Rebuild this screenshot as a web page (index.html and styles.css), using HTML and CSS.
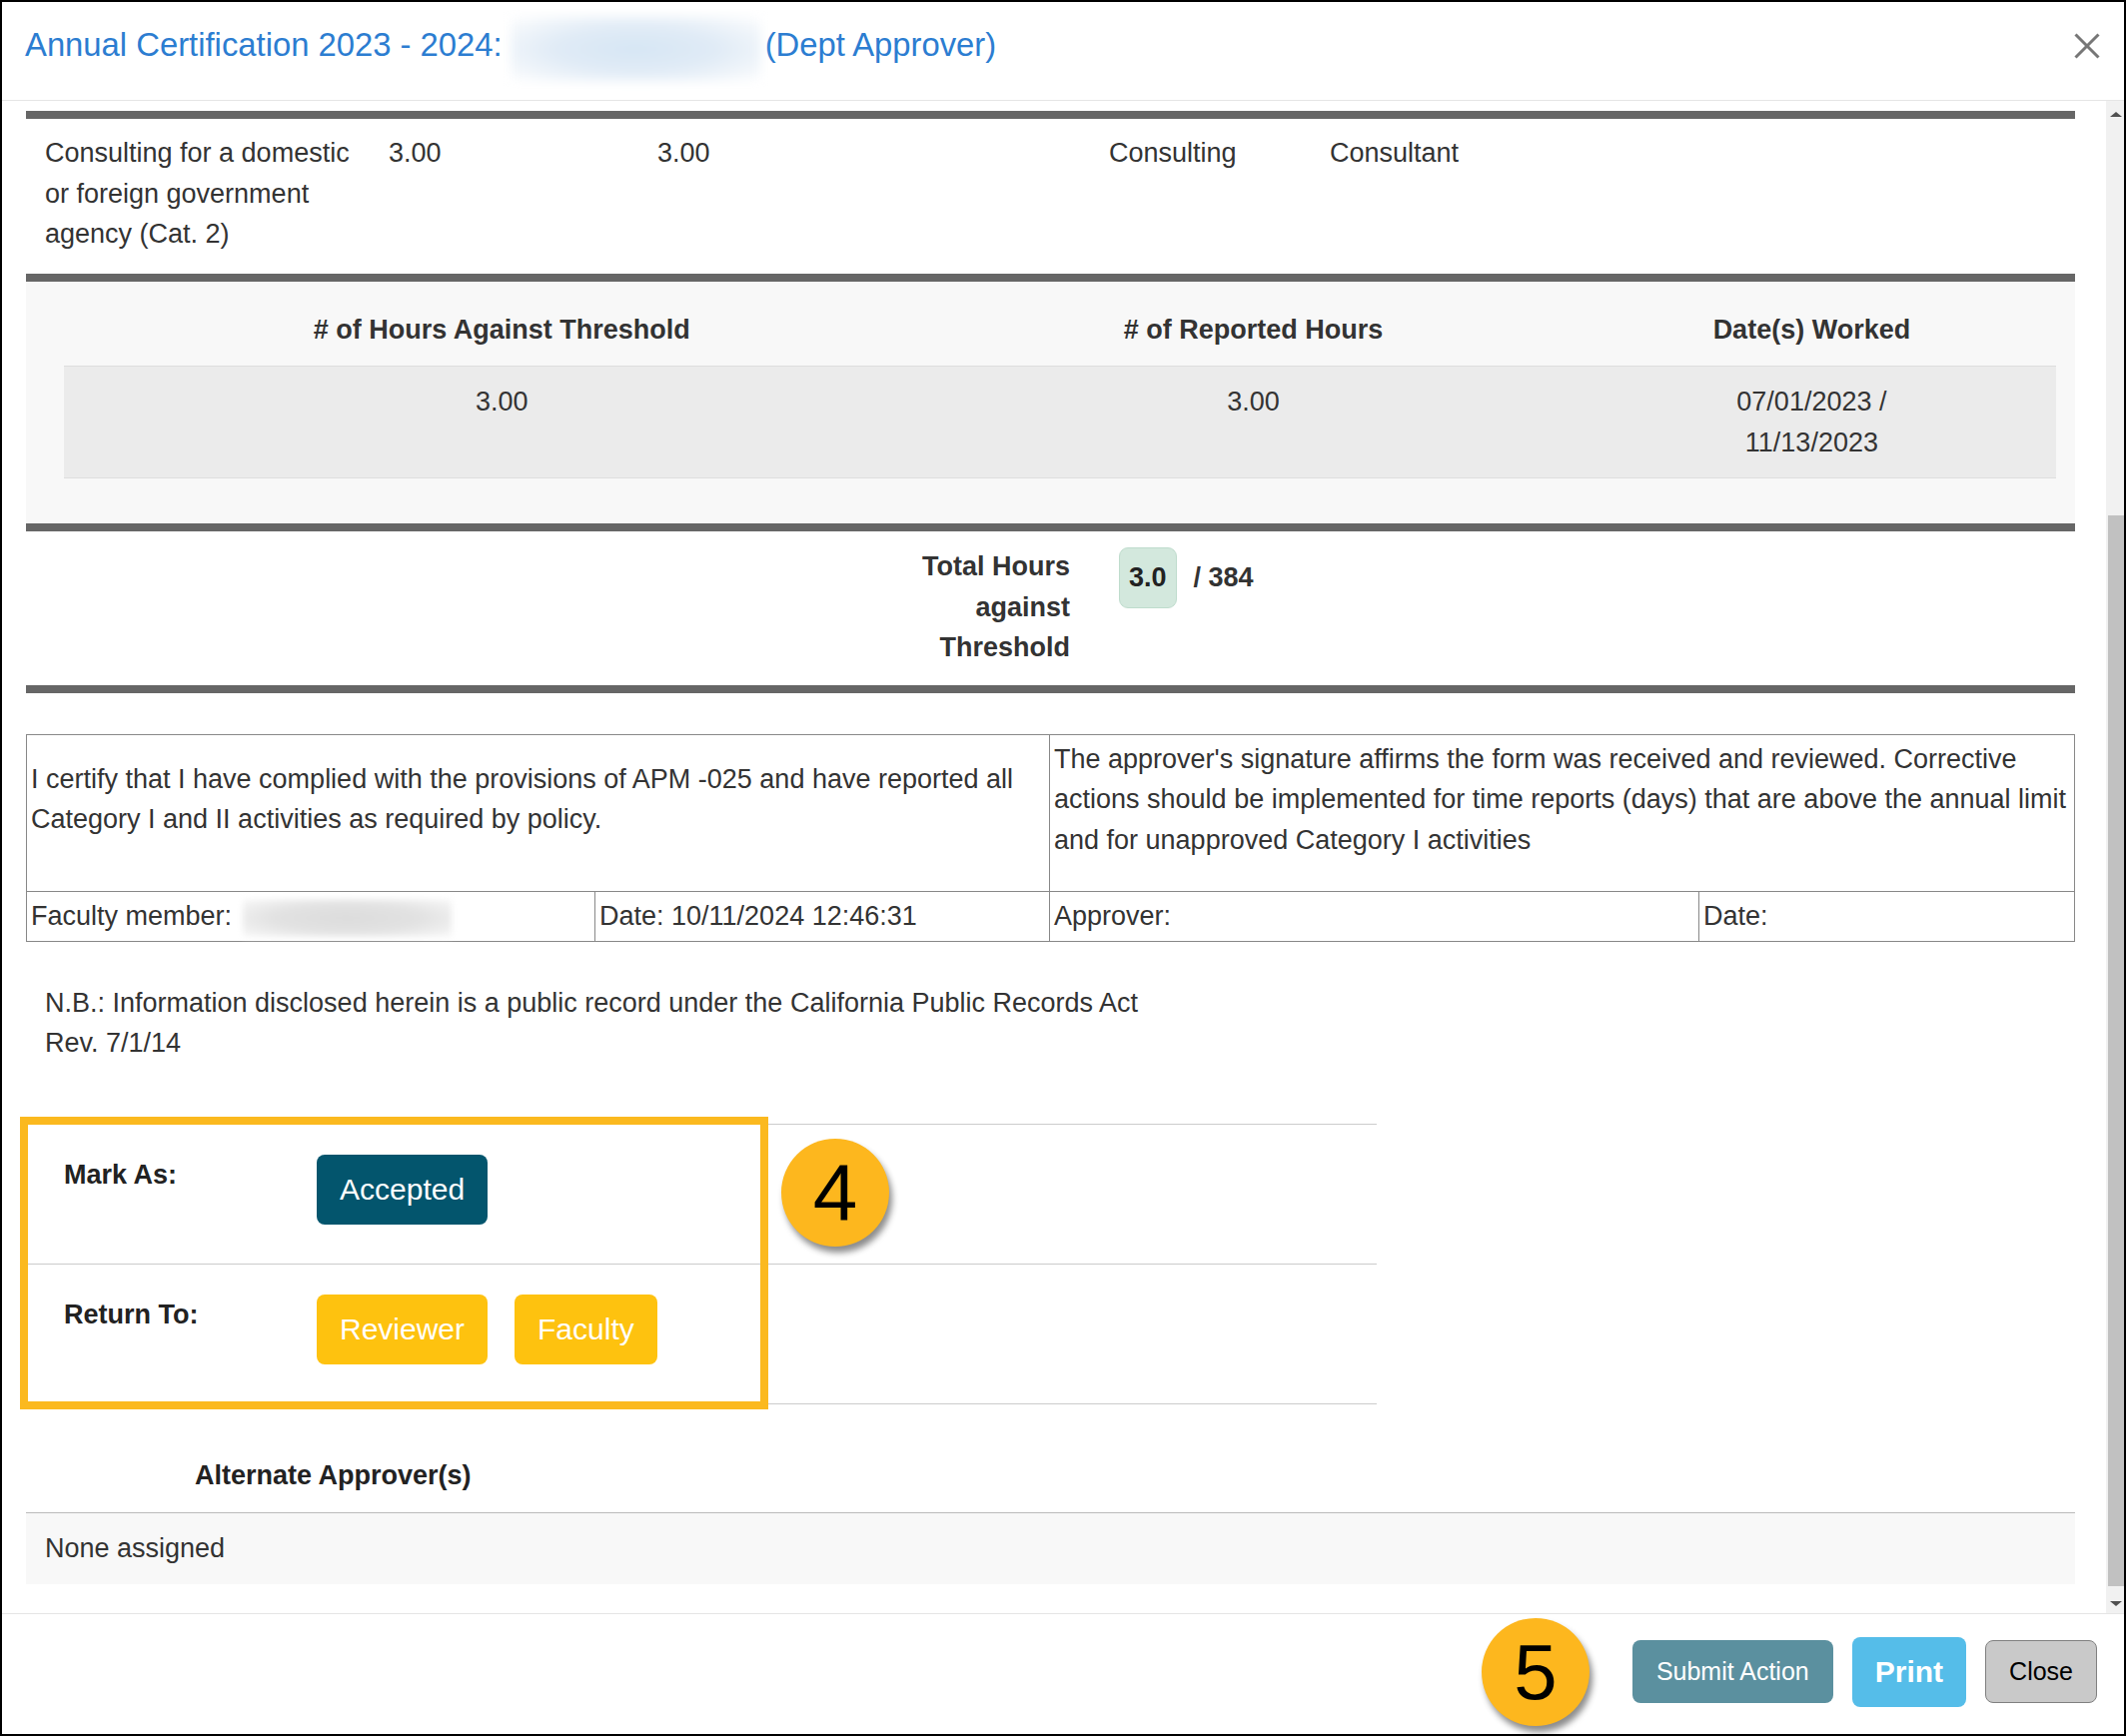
FILE: index.html
```html
<!DOCTYPE html>
<html lang="en">
<head>
<meta charset="utf-8">
<title>Annual Certification</title>
<link rel="stylesheet" href="styles.css">
</head>
<body>
<div class="frame">
  <header class="hdr">
    <h1 class="title"><span>Annual Certification 2023 - 2024:</span><span class="blur-name"></span><span class="role">(Dept Approver)</span></h1>
    <svg class="x-icon" width="26" height="26" viewBox="0 0 26 26"><line x1="1.5" y1="1.5" x2="24.5" y2="24.5"/><line x1="24.5" y1="1.5" x2="1.5" y2="24.5"/></svg>
  </header>
  <div class="scroll">
    <main class="content">
      <div class="bar"></div>
      <div class="activity">
        <div class="a1">Consulting for a domestic or foreign government agency (Cat. 2)</div>
        <div class="a2">3.00</div>
        <div class="a3">3.00</div>
        <div class="a4">Consulting</div>
        <div class="a5">Consultant</div>
      </div>
      <div class="bar"></div>
      <div class="panel">
        <table class="hours">
          <colgroup><col class="hc1"><col class="hc2"><col class="hc3"></colgroup>
          <thead>
            <tr><th># of Hours Against Threshold</th><th># of Reported Hours</th><th>Date(s) Worked</th></tr>
          </thead>
          <tbody>
            <tr><td>3.00</td><td>3.00</td><td>07/01/2023 /<br>11/13/2023</td></tr>
          </tbody>
        </table>
      </div>
      <div class="bar"></div>
      <div class="total">
        <div class="total-label">Total Hours against Threshold</div>
        <div class="total-val"><span class="badge">3.0</span><span class="of">/ 384</span></div>
      </div>
      <div class="bar"></div>
      <table class="cert">
        <colgroup><col class="cc1"><col class="cc2"><col class="cc3"><col class="cc4"></colgroup>
        <tr>
          <td colspan="2" class="stmt"><p>I certify that I have complied with the provisions of APM -025 and have reported all Category I and II activities as required by policy.</p></td>
          <td colspan="2" class="stmt"><p>The approver's signature affirms the form was received and reviewed. Corrective actions should be implemented for time reports (days) that are above the annual limit and for unapproved Category I activities</p></td>
        </tr>
        <tr class="sig">
          <td>Faculty member: <span class="blur-fac"></span></td>
          <td>Date: 10/11/2024 12:46:31</td>
          <td>Approver:</td>
          <td>Date:</td>
        </tr>
      </table>
      <div class="nb">N.B.: Information disclosed herein is a public record under the California Public Records Act<br>Rev. 7/1/14</div>
      <div class="actions">
        <div class="arow">
          <div class="alabel">Mark As:</div>
          <div class="abtns"><span class="btn btn-acc">Accepted</span></div>
        </div>
        <div class="arow">
          <div class="alabel">Return To:</div>
          <div class="abtns"><span class="btn btn-yel">Reviewer</span><span class="btn btn-yel">Faculty</span></div>
        </div>
        <div class="highlight"></div>
        <div class="callout c4">4</div>
      </div>
      <div class="alt-h">Alternate Approver(s)</div>
      <div class="alt-row">None assigned</div>
    </main>
    <div class="sbar">
      <div class="arr-up"></div>
      <div class="thumb"></div>
      <div class="arr-down"></div>
    </div>
  </div>
  <footer class="ftr">
    <div class="callout c5">5</div>
    <span class="fbtn f-submit">Submit Action</span>
    <span class="fbtn f-print">Print</span>
    <span class="fbtn f-close">Close</span>
  </footer>
</div>
</body>
</html>
```

FILE: styles.css
```css
* { box-sizing: border-box; }
html, body { margin: 0; padding: 0; background: #fff; }
body {
  font-family: "Liberation Sans", Arial, sans-serif;
  font-size: 27px;
  line-height: 40.5px;
  color: #333;
}
.frame {
  width: 2128px;
  height: 1738px;
  border: 2px solid #000;
  display: flex;
  flex-direction: column;
  overflow: hidden;
}

/* header */
.hdr {
  height: 99px;
  flex: none;
  display: flex;
  align-items: flex-start;
  padding: 24px 24px 0 23px;
  border-bottom: 1px solid #e5e5e5;
}
.title {
  margin: 0;
  display: flex;
  align-items: flex-start;
  font-size: 32.8px;
  line-height: 38px;
  font-weight: normal;
  color: #2c7dd1;
  white-space: nowrap;
}
.blur-name {
  display: inline-block;
  width: 251px;
  height: 66px;
  margin: -10px 4px 0 8px;
  background: radial-gradient(ellipse at 50% 50%, #d6e6f4 0%, #e0ebf6 45%, #f3f7fb 80%, #fff 100%);
  filter: blur(5px);
}
.x-icon {
  margin-left: auto;
  margin-top: 7px;
  stroke: #777;
  stroke-width: 3;
}

/* scroll area */
.scroll {
  flex: 1;
  display: flex;
  min-height: 0;
}
.content {
  flex: 1;
  padding: 10px 31px 0 24px;
}
.bar {
  height: 8px;
  background: #666;
}
.activity {
  display: grid;
  grid-template-columns: 344px 269px 452px 221px 1fr;
  padding: 14px 0 19px;
}
.activity > div { padding-left: 19px; }
.activity .a1 { padding-right: 10px; }

.panel {
  background: #f8f8f8;
  padding: 12px 19px 45px 38px;
}
.hours {
  width: 100%;
  border-collapse: collapse;
  table-layout: fixed;
}
.hc1 { width: 876px; }
.hc2 { width: 628px; }
.hc3 { width: 489px; }
.hours th {
  font-weight: bold;
  text-align: center;
  padding: 16px 0;
  border-bottom: 1px solid #dedede;
}
.hours td {
  text-align: center;
  vertical-align: top;
  background: #ebebeb;
  padding: 15px 0;
  border-bottom: 1px solid #dedede;
}

.total {
  display: flex;
  align-items: flex-start;
  padding: 15px 0 17px 855px;
}
.total-label {
  width: 190px;
  text-align: right;
  font-weight: bold;
}
.total-val {
  margin-left: 49px;
  margin-top: 1px;
  display: flex;
  align-items: center;
  font-weight: bold;
}
.badge {
  display: inline-block;
  background: #d3e8dd;
  border: 1px solid #bfdccd;
  border-radius: 9px;
  padding: 9px 9px;
  line-height: 41px;
  color: #222;
}
.of { margin-left: 17px; }

.cert {
  width: 100%;
  margin-top: 41px;
  border-collapse: collapse;
  table-layout: fixed;
}
.cc1 { width: 569px; }
.cc2 { width: 455px; }
.cc3 { width: 650px; }
.cc4 { width: 376px; }
.cert td {
  border: 1px solid #888;
  padding: 4px;
  vertical-align: middle;
}
.cert p { margin: 0 0 27px; }
.blur-fac {
  display: inline-block;
  width: 209px;
  height: 38px;
  margin-left: 3px;
  vertical-align: middle;
  background: radial-gradient(ellipse at 50% 50%, #dcdcdc 0%, #e2e2e2 50%, #f2f2f2 85%, #fafafa 100%);
  filter: blur(3px);
}

.nb {
  margin-top: 41px;
  padding-left: 19px;
}

.actions {
  position: relative;
  width: 1352px;
  margin-top: 60px;
  border-bottom: 1px solid #ccc;
}
.arow {
  display: flex;
  border-top: 1px solid #ccc;
  padding: 30px 0 39px;
}
.alabel {
  width: 291px;
  padding-left: 38px;
  font-weight: bold;
  color: #222;
}
.abtns {
  display: flex;
  gap: 27px;
}
.btn {
  display: inline-block;
  font-size: 30px;
  line-height: 34px;
  padding: 18px 23px;
  border-radius: 8px;
  color: #fff;
}
.btn-acc { background: #03556d; }
.btn-yel { background: #fec20f; }
.highlight {
  position: absolute;
  left: -6px;
  top: -7px;
  width: 749px;
  height: 293px;
  border: 8px solid #fbb91f;
}
.callout {
  position: absolute;
  width: 108px;
  height: 108px;
  border-radius: 50%;
  background: #fdb71e;
  color: #000;
  display: flex;
  align-items: center;
  justify-content: center;
  font-size: 80px;
  line-height: 1;
  box-shadow: 3px 6px 6px rgba(0, 0, 0, 0.45);
}
.c4 { left: 756px; top: 15px; }
.c5 { left: 1481px; top: 4px; font-size: 78px; }

.alt-h {
  margin-top: 51px;
  padding: 0 0 17px 169px;
  font-weight: bold;
  color: #222;
  border-bottom: 1px solid #bbb;
}
.alt-row {
  background: #f8f8f8;
  padding: 15px 19px;
}

/* scrollbar */
.sbar {
  width: 19px;
  flex: none;
  background: #f1f1f1;
  display: flex;
  flex-direction: column;
  align-items: center;
}
.arr-up {
  margin-top: 11px;
  width: 0; height: 0;
  border-left: 6px solid transparent;
  border-right: 6px solid transparent;
  border-bottom: 5px solid #505050;
}
.thumb {
  margin-top: 399px;
  width: 17px;
  margin-left: 2px;
  height: 1072px;
  background: #c1c1c1;
}
.arr-down {
  margin-top: 15px;
  width: 0; height: 0;
  border-left: 6px solid transparent;
  border-right: 6px solid transparent;
  border-top: 5px solid #505050;
}

/* footer */
.ftr {
  position: relative;
  flex: none;
  height: 121px;
  border-top: 1px solid #e5e5e5;
  display: flex;
  justify-content: flex-end;
  align-items: center;
  gap: 19px;
  padding: 0 27px 5px 0;
}
.fbtn {
  display: inline-block;
  border-radius: 8px;
  color: #fff;
}
.f-submit {
  background: #5b909f;
  font-size: 25px;
  line-height: 29px;
  padding: 17px 24px;
}
.f-print {
  background: #55bde9;
  font-size: 30px;
  font-weight: bold;
  line-height: 34px;
  padding: 18px 23px;
}
.f-close {
  background: #c9c9c9;
  border: 1px solid #808080;
  color: #000;
  font-size: 25px;
  line-height: 29px;
  padding: 16px 23px;
}
```
